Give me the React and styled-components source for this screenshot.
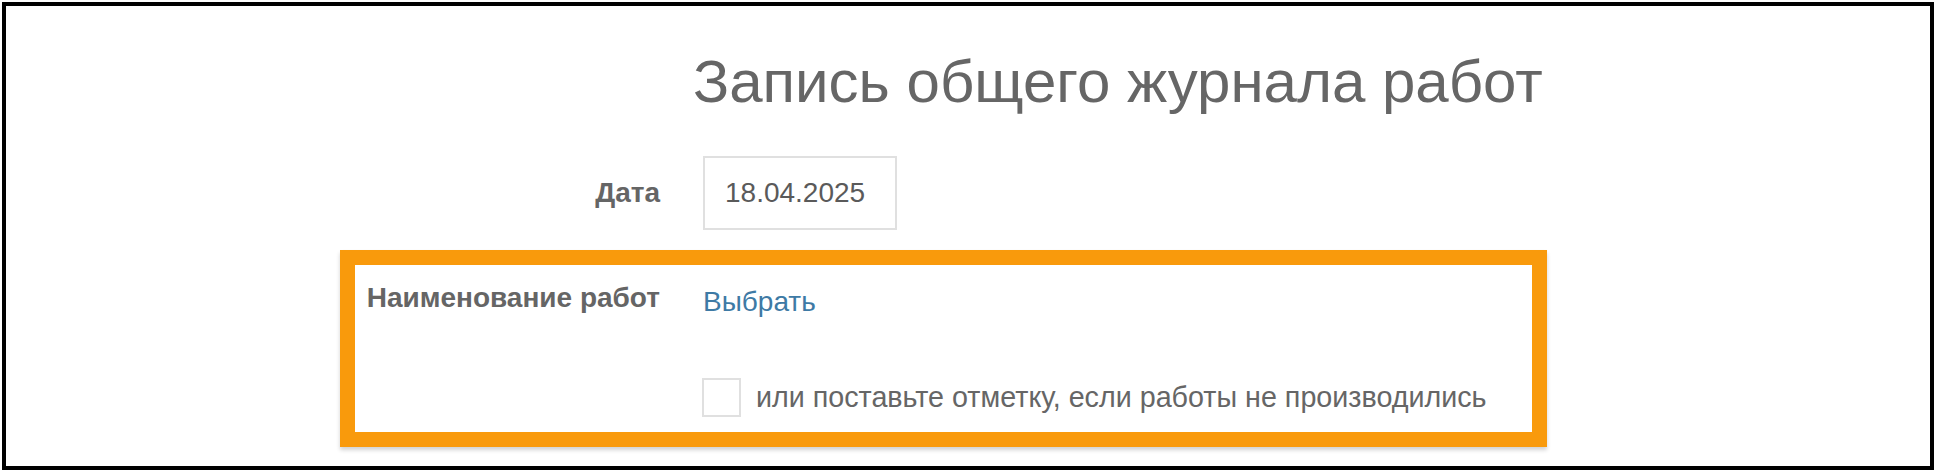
import React from "react";
import styled, { createGlobalStyle } from "styled-components";

const Global = createGlobalStyle`
  html, body { margin: 0; padding: 0; background: #fff; }
  body { font-family: "Liberation Sans", Arial, sans-serif; color: #666; }
  * { box-sizing: border-box; }
`;

const Frame = styled.div`
  margin: 2px;
  width: 1932px;
  height: 468px;
  border: 4px solid #000;
  background: #fff;
  overflow: hidden;
`;

const Form = styled.div`
  margin-left: 334px;
  width: 1207px;
  display: flex;
  flex-direction: column;
`;

const Title = styled.h1`
  margin: 46px 0 0 353px;
  font-size: 60px;
  line-height: 59px;
  font-weight: 400;
  color: #666;
  white-space: nowrap;
`;

const Row = styled.div`
  display: grid;
  grid-template-columns: 295px 1fr;
  column-gap: 43px;
  align-items: ${(p) => p.$align || "center"};
  padding-left: ${(p) => p.$inset || 0}px;
  margin-top: ${(p) => p.$top || 0}px;
`;

const Label = styled.div`
  text-align: right;
  font-size: 28px;
  line-height: 40px;
  font-weight: 700;
  color: #656565;
  white-space: nowrap;
`;

const DateInput = styled.input`
  width: 194px;
  height: 74px;
  border: 2px solid #e0e0e0;
  border-radius: 0;
  padding: 0 0 0 20px;
  font-family: "Liberation Sans", Arial, sans-serif;
  font-size: 28px;
  color: #5a5a5a;
  background: #fff;
  outline: none;
`;

const Highlight = styled.section`
  margin-top: 20px;
  border: 15px solid #f99a0c;
  padding: 13px 10px 15px 10px;
  box-shadow: 0 3px 4px rgba(0, 0, 0, 0.18);
`;

const Link = styled.a`
  display: block;
  padding-top: 4px;
  font-size: 28px;
  line-height: 40px;
  color: #3e7aa5;
  text-decoration: none;
  cursor: pointer;
`;

const CheckLine = styled.label`
  display: flex;
  align-items: center;
  gap: 15px;
  margin-left: -1px;
  font-size: 28.7px;
  color: #666;
  white-space: nowrap;
`;

const Box = styled.span`
  width: 39px;
  height: 39px;
  border: 2px solid #e0e0e0;
  background: #fff;
  flex: none;
`;

export default function App() {
  return (
    <>
      <Global />
      <Frame>
        <Form>
          <Title>Запись общего журнала работ</Title>
          <Row $inset={25} $top={45}>
            <Label>Дата</Label>
            <div>
              <DateInput readOnly defaultValue="18.04.2025" />
            </div>
          </Row>
          <Highlight>
            <Row $align="start">
              <Label>Наименование работ</Label>
              <Link>Выбрать</Link>
            </Row>
            <Row $top={56}>
              <span />
              <CheckLine>
                <Box />
                или поставьте отметку, если работы не производились
              </CheckLine>
            </Row>
          </Highlight>
        </Form>
      </Frame>
    </>
  );
}
